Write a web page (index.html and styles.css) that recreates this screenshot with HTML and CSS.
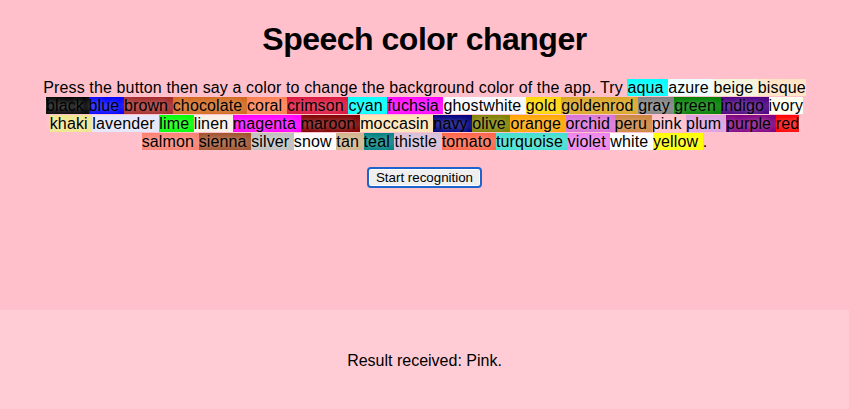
FILE: index.html
```html
<!DOCTYPE html>
<html lang="en">
<head>
    <meta charset="UTF-8">
    <meta name="viewport" content="width=device-width, initial-scale=1.0">
    <title>Speech color changer</title>
    <link rel="stylesheet" href="styles.css">
</head>
<body>
    <main class="app">
        <h1>Speech color changer</h1>
        <p class="hints">Press the button then say a color to change the background color of the app. Try <span style="background-color:aqua;"> aqua </span><span style="background-color:azure;"> azure </span><span style="background-color:beige;"> beige </span><span style="background-color:bisque;"> bisque </span><br><span style="background-color:black;"> black </span><span style="background-color:blue;"> blue </span><span style="background-color:brown;"> brown </span><span style="background-color:chocolate;"> chocolate </span><span style="background-color:coral;"> coral </span><span style="background-color:crimson;"> crimson </span><span style="background-color:cyan;"> cyan </span><span style="background-color:fuchsia;"> fuchsia </span><span style="background-color:ghostwhite;"> ghostwhite </span><span style="background-color:gold;"> gold </span><span style="background-color:goldenrod;"> goldenrod </span><span style="background-color:gray;"> gray </span><span style="background-color:green;"> green </span><span style="background-color:indigo;"> indigo </span><span style="background-color:ivory;"> ivory </span><br><span style="background-color:khaki;"> khaki </span><span style="background-color:lavender;"> lavender </span><span style="background-color:lime;"> lime </span><span style="background-color:linen;"> linen </span><span style="background-color:magenta;"> magenta </span><span style="background-color:maroon;"> maroon </span><span style="background-color:moccasin;"> moccasin </span><span style="background-color:navy;"> navy </span><span style="background-color:olive;"> olive </span><span style="background-color:orange;"> orange </span><span style="background-color:orchid;"> orchid </span><span style="background-color:peru;"> peru </span><span style="background-color:pink;"> pink </span><span style="background-color:plum;"> plum </span><span style="background-color:purple;"> purple </span><span style="background-color:red;"> red </span><br><span style="background-color:salmon;"> salmon </span><span style="background-color:sienna;"> sienna </span><span style="background-color:silver;"> silver </span><span style="background-color:snow;"> snow </span><span style="background-color:tan;"> tan </span><span style="background-color:teal;"> teal </span><span style="background-color:thistle;"> thistle </span><span style="background-color:tomato;"> tomato </span><span style="background-color:turquoise;"> turquoise </span><span style="background-color:violet;"> violet </span><span style="background-color:white;"> white </span><span style="background-color:yellow;"> yellow </span>.</p>
        <div class="controls">
            <button>Start recognition</button>
        </div>
    </main>
    <div class="result">
        <p class="output">Result received: Pink.</p>
    </div>
</body>
</html>
```

FILE: styles.css
```css
html, body {
    margin: 0;
    height: 100%;
}
body {
    display: flex;
    flex-direction: column;
    overflow: hidden;
    background-color: pink;
    color: #000;
    font-family: 'Liberation Sans', Arial, sans-serif;
}
.app {
    flex: 1;
    width: 100%;
    max-width: 800px;
    margin: 0 auto;
}
h1, p {
    text-align: center;
}
h1 {
    font-size: 32px;
    letter-spacing: -0.5px;
    margin: 21px 0;
}
.hints {
    font-size: 16px;
    line-height: 18px;
    letter-spacing: 0.13px;
    margin: 0 0 16px;
}
.hints span {
    text-shadow: 0px 0px 6px rgba(255,255,255,0.7);
}
.controls {
    text-align: center;
}
button {
    font-family: 'Liberation Sans', Arial, sans-serif;
    font-size: 13.33px;
    color: #000;
    background-color: #efefef;
    border: 2px solid #1d64cc;
    border-radius: 4px;
    padding: 1px 7px;
    box-shadow: inset 0 0 0 1px #fff;
}
.result {
    height: 99px;
    background-color: rgba(255,255,255,0.2);
}
.output {
    margin: 42px 0 0;
    font-size: 16px;
    line-height: 18px;
}
```
